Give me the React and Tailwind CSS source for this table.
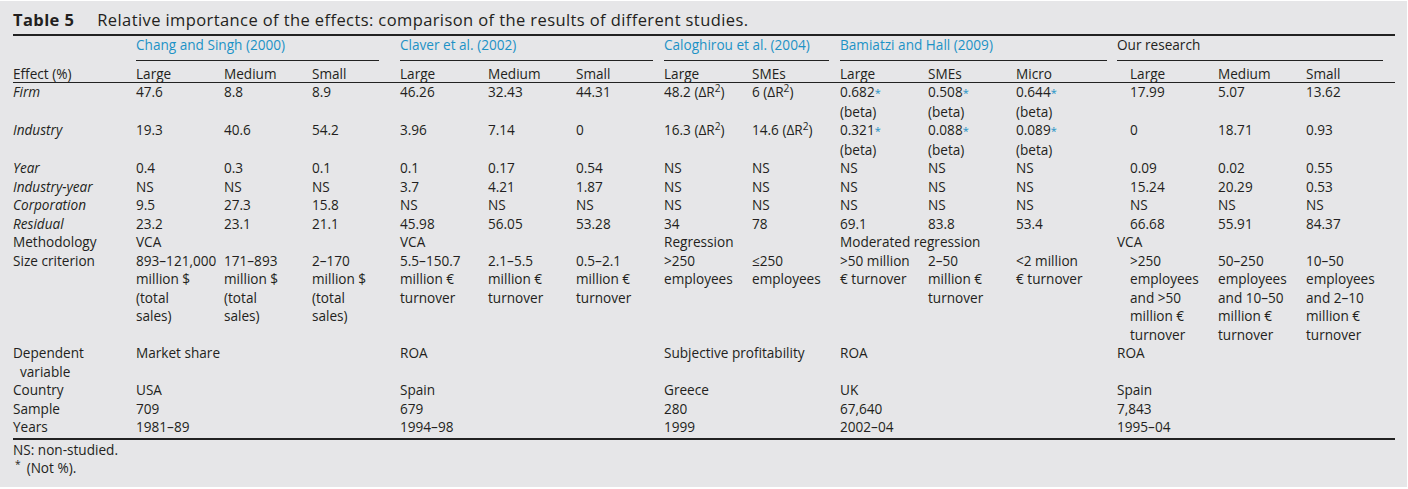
import React from 'react';

// column template shared by the header and body grids
const cols =
  'grid grid-cols-[123px_88px_88px_88px_88px_88px_88px_88px_88px_88px_88px_101px_101px_88px_89px]';

const Star = () => <span className="text-[#1d92c6] text-[11px]">*</span>;

const dr = (v) => (
  <>
    {v} (ΔR<sup>2</sup>)
  </>
);

const beta = (v) => (
  <>
    {v}
    <Star />
    <br />
    (beta)
  </>
);

const lines = (...parts) =>
  parts.map((p, i) => (
    <React.Fragment key={i}>
      {i > 0 && <br />}
      {p}
    </React.Fragment>
  ));

const rows = [
  {
    label: 'Firm',
    it: true,
    cells: ['47.6', '8.8', '8.9', '46.26', '32.43', '44.31', dr('48.2'), dr('6'), beta('0.682'), beta('0.508'), beta('0.644'), '17.99', '5.07', '13.62'],
  },
  {
    label: 'Industry',
    it: true,
    cells: ['19.3', '40.6', '54.2', '3.96', '7.14', '0', dr('16.3'), dr('14.6'), beta('0.321'), beta('0.088'), beta('0.089'), '0', '18.71', '0.93'],
  },
  {
    label: 'Year',
    it: true,
    cells: ['0.4', '0.3', '0.1', '0.1', '0.17', '0.54', 'NS', 'NS', 'NS', 'NS', 'NS', '0.09', '0.02', '0.55'],
  },
  {
    label: 'Industry-year',
    it: true,
    cells: ['NS', 'NS', 'NS', '3.7', '4.21', '1.87', 'NS', 'NS', 'NS', 'NS', 'NS', '15.24', '20.29', '0.53'],
  },
  {
    label: 'Corporation',
    it: true,
    cells: ['9.5', '27.3', '15.8', 'NS', 'NS', 'NS', 'NS', 'NS', 'NS', 'NS', 'NS', 'NS', 'NS', 'NS'],
  },
  {
    label: 'Residual',
    it: true,
    cells: ['23.2', '23.1', '21.1', '45.98', '56.05', '53.28', '34', '78', '69.1', '83.8', '53.4', '66.68', '55.91', '84.37'],
  },
  {
    label: 'Methodology',
    cells: [
      { span: 3, c: 'VCA' },
      { span: 3, c: 'VCA' },
      { span: 2, c: 'Regression' },
      { span: 3, c: 'Moderated regression' },
      { span: 3, c: 'VCA' },
    ],
  },
  {
    label: 'Size criterion',
    cells: [
      lines('893–121,000', 'million $', '(total', 'sales)'),
      lines('171–893', 'million $', '(total', 'sales)'),
      lines('2–170', 'million $', '(total', 'sales)'),
      lines('5.5–150.7', 'million €', 'turnover'),
      lines('2.1–5.5', 'million €', 'turnover'),
      lines('0.5–2.1', 'million €', 'turnover'),
      lines('>250', 'employees'),
      lines('≤250', 'employees'),
      lines('>50 million', '€ turnover'),
      lines('2–50', 'million €', 'turnover'),
      lines('<2 million', '€ turnover'),
      lines('>250', 'employees', 'and >50', 'million €', 'turnover'),
      lines('50–250', 'employees', 'and 10–50', 'million €', 'turnover'),
      lines('10–50', 'employees', 'and 2–10', 'million €', 'turnover'),
    ],
  },
  {
    label: (
      <>
        Dependent
        <br />
        <span className="pl-[7px]">variable</span>
      </>
    ),
    cells: [
      { span: 3, c: 'Market share' },
      { span: 3, c: 'ROA' },
      { span: 2, c: 'Subjective profitability' },
      { span: 3, c: 'ROA' },
      { span: 3, c: 'ROA' },
    ],
  },
  {
    label: 'Country',
    cells: [
      { span: 3, c: 'USA' },
      { span: 3, c: 'Spain' },
      { span: 2, c: 'Greece' },
      { span: 3, c: 'UK' },
      { span: 3, c: 'Spain' },
    ],
  },
  {
    label: 'Sample',
    cells: [
      { span: 3, c: '709' },
      { span: 3, c: '679' },
      { span: 2, c: '280' },
      { span: 3, c: '67,640' },
      { span: 3, c: '7,843' },
    ],
  },
  {
    label: 'Years',
    cells: [
      { span: 3, c: '1981–89' },
      { span: 3, c: '1994–98' },
      { span: 2, c: '1999' },
      { span: 3, c: '2002–04' },
      { span: 3, c: '1995–04' },
    ],
  },
];

const spanClass = { 1: '', 2: 'col-span-2', 3: 'col-span-3' };

const GroupHead = ({ span, gap, blue, children }) => (
  <div className={span}>
    <div className={`${gap} border-b border-[#222] pb-[6px] ${blue ? 'text-[#1d92c6]' : ''}`}>
      {children}
    </div>
  </div>
);

const Row = ({ row }) => {
  let idx = 0;
  return (
    <>
      <div className={row.it ? 'italic' : ''}>{row.label}</div>
      {row.cells.map((cell, i) => {
        const span = cell?.span ?? 1;
        const content = cell?.span ? cell.c : cell;
        const indent = span === 1 && idx === 11;
        idx += span;
        return (
          <div key={i} className={`${spanClass[span]} ${indent ? 'pl-[13px]' : ''}`}>
            {content}
          </div>
        );
      })}
    </>
  );
};

export default function App() {
  const subHeads = ['Large', 'Medium', 'Small', 'Large', 'Medium', 'Small', 'Large', 'SMEs', 'Large', 'SMEs', 'Micro', 'Large', 'Medium', 'Small'];

  return (
    <div className="bg-white w-[1408px] h-[489px] overflow-hidden">
      <div className="mt-px w-[1407px] h-[486px] bg-[#e6e6e8] pl-[13px] pt-[8.5px] text-[#231f20] font-['Open_Sans',sans-serif]">
        {/* caption */}
        <div className="flex text-[16.5px] tracking-[0.4px] leading-[20px] mb-[4px]">
          <span className="font-bold">Table 5</span>
          <span className="ml-[23px]">
            Relative importance of the effects: comparison of the results of different studies.
          </span>
        </div>

        <div className="w-[1382px] text-[13.6px] leading-[18.5px]">
          {/* study groups */}
          <div className={`${cols} border-t-2 border-[#222]`}>
            <div />
            <GroupHead span="col-span-3" gap="mr-[21px]" blue>
              Chang and Singh (2000)
            </GroupHead>
            <GroupHead span="col-span-3" gap="mr-[11px]" blue>
              Claver et al. (2002)
            </GroupHead>
            <GroupHead span="col-span-2" gap="mr-[11px]" blue>
              Caloghirou et al. (2004)
            </GroupHead>
            <GroupHead span="col-span-3" gap="mr-[10px]" blue>
              Bamiatzi and Hall (2009)
            </GroupHead>
            <GroupHead span="col-span-3" gap="mr-[12px]">
              Our research
            </GroupHead>
          </div>

          {/* sizes */}
          <div className={`${cols} border-b border-[#222] leading-[17px] pt-[4px]`}>
            <div>Effect (%)</div>
            {subHeads.map((h, i) => (
              <div key={i} className={i === 11 ? 'pl-[13px]' : ''}>
                {h}
              </div>
            ))}
          </div>

          {/* body */}
          <div className={`${cols} border-b-2 border-[#222] pb-px`}>
            {rows.map((r, i) => (
              <Row key={i} row={r} />
            ))}
          </div>

          {/* notes */}
          <div className="pt-px">NS: non-studied.</div>
          <div>
            <sup className="ml-[2px] mr-[6px]">*</sup>(Not %).
          </div>
        </div>
      </div>
    </div>
  );
}
